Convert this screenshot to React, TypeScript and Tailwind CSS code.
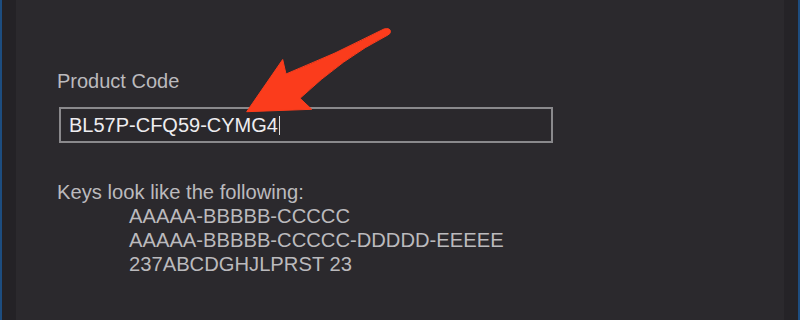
import React from "react";

export default function App() {
  const font = { fontFamily: '"Liberation Sans", Arial, Helvetica, sans-serif' };
  return (
    <div className="relative w-[800px] h-[320px] overflow-hidden flex bg-[#2b292d]" style={font}>
      <div className="w-[16px] h-full bg-[#242226] border-l-2 border-[#1d4d80]" />
      <div className="flex-1 h-full pl-[41px] pt-[69px] flex flex-col items-start">
        <div className="text-[20px] leading-[24px] text-[#bbbabd]">Product Code</div>
        <div className="mt-[14px] ml-[2px] w-[494px] h-[36px] border-2 border-[#8a898c] bg-[#2a282c] pl-[8px] flex items-center">
          <span className="text-[20px] leading-[24px] text-[#eeedf0]">BL57P-CFQ59-CYMG4</span>
          <span className="ml-[1px] w-[1px] h-[19px] bg-[#dcdcdc]" />
        </div>
        <div className="mt-[37px] text-[20.2px] leading-[24px] text-[#bbbabd]">
          <div>Keys look like the following:</div>
          <div className="pl-[72px]">AAAAA-BBBBB-CCCCC</div>
          <div className="pl-[72px]">AAAAA-BBBBB-CCCCC-DDDDD-EEEEE</div>
          <div className="pl-[72px]">237ABCDGHJLPRST 23</div>
        </div>
      </div>
      <div className="w-[16px] h-full bg-[#252327] border-r-2 border-[#1d4d80]" />
      <svg className="absolute left-0 top-0" width="800" height="320" viewBox="0 0 800 320">
        <path
          d="M 246.7 111.7 L 282.7 59.5 L 286 74 Q 335 54.5 384 29 Q 390 27.5 390.5 31.5 Q 390.5 34 387 35.5 Q 343.5 57.5 300 98.3 L 311.7 109.3 Z"
          fill="#fb3c1c"
          stroke="#fb3c1c"
          strokeWidth="1"
          strokeLinejoin="round"
        />
      </svg>
    </div>
  );
}
